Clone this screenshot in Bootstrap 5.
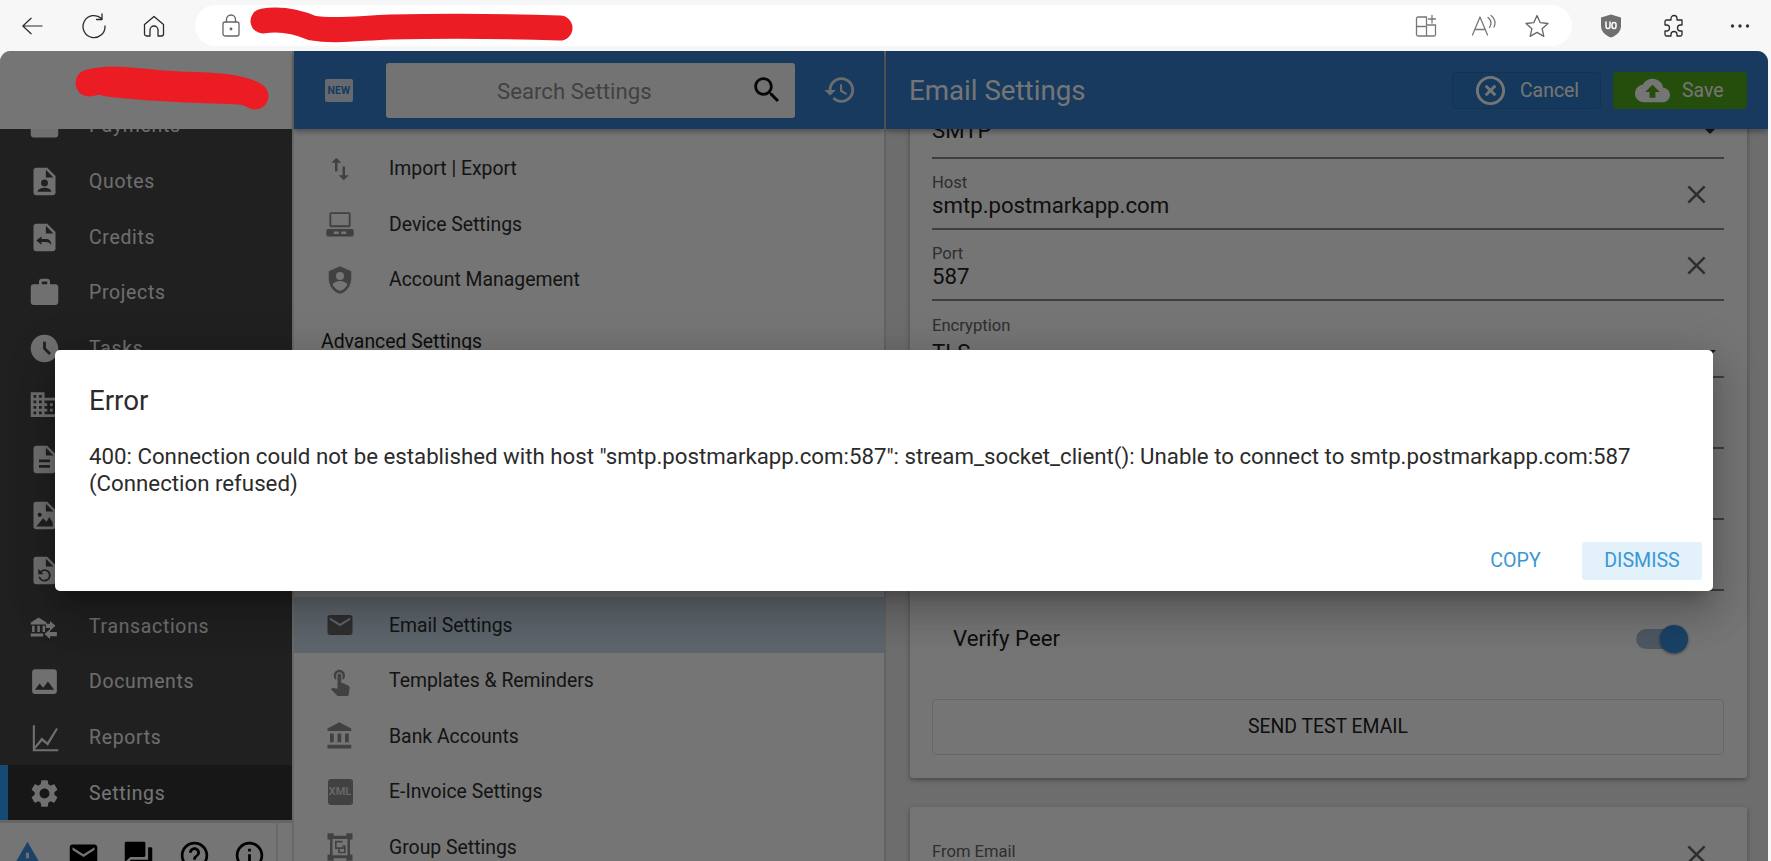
<!DOCTYPE html>
<html lang="en">
<head>
<meta charset="utf-8">
<title>Email Settings</title>
<link href="https://cdn.jsdelivr.net/npm/bootstrap@5.3.0/dist/css/bootstrap.min.css" rel="stylesheet">
<style>
html,body{height:861px;overflow:hidden;background:#f7f7f7;font-family:Roboto,"Liberation Sans",sans-serif;}
svg{display:block;flex:none;}
.chrome{height:51px;background:#f7f7f7;padding:0 21px 0 22px;}
.chrome svg{fill:none;stroke:#2b2b2b;stroke-width:1.3;stroke-linecap:round;stroke-linejoin:round;}
.chrome .dim{stroke:#777;}
.addr{width:1382px;height:41px;margin:0 28px 0 29px;background:#fff;border-radius:21px;padding:0 22px 0 26px;position:relative;}
.tbtn{width:22px;}
.redline{position:absolute;z-index:6;pointer-events:none;overflow:visible;}
.frame{position:relative;height:810px;width:1768px;border-radius:11px 11px 0 0;overflow:hidden;background:#fff;}
.sidecol{width:294px;flex:none;background:#464646;border-right:2px solid #e2e2e2;}
.logoarea{height:78px;background:#fff;flex:none;}
.sidescroll{height:692px;overflow:hidden;flex:none;}
.sideitem{height:55.6px;padding-left:28px;gap:28px;color:#f0f0f0;font-size:19.4px;font-weight:400;letter-spacing:.7px;fill:#f4f4f4;}
.sideitem svg{width:33px;height:33px;fill:#f4f4f4;}
.sideitem.on{background:#333;box-shadow:inset 8px 0 0 #329fff;color:#fff;}
.sidefoot{flex:1;background:#fff;border-top:3px solid #dcdcdc;padding:0 14px 0 11px;margin-top:-1.5px;}
.sidefoot svg{width:33px;height:33px;}
.footrow{flex:1;height:100%;border-right:2px solid #e4e4e4;padding:16px 10px 0 0;}
.setcol{width:592px;flex:none;border-right:2px solid #d8d8d8;background:#fff;}
.bluebar{height:78px;background:#327fcd;flex:none;box-shadow:0 3px 5px rgba(0,0,0,.3);position:relative;z-index:2;}
.newbadge{width:28px;height:23px;background:#dfe8f1;color:#327fcd;border-radius:2px;font-size:10.5px;font-weight:700;line-height:23px;text-align:center;margin:0 33px 0 31px;letter-spacing:.1px;}
.searchbox{width:409px;height:55px;background:#fafbfc;border-radius:3px;color:#8f8f8f;font-size:22.2px;padding-left:111px;padding-right:11px;}
.searchlabel{padding-top:3px;}
.searchbox svg{width:34px;height:34px;fill:#111;margin-left:auto;}
.histicon{width:34px;height:34px;fill:#e8eef4;margin-left:28px;}
.setlist{padding-top:12px;height:732px;overflow:hidden;flex:none;}
.setitem{height:55.55px;padding-left:31px;gap:34px;color:#2c2c2c;font-size:19.4px;}
.setitem svg{width:30px;height:30px;fill:#8f8f8f;}
.setitem.on{background:#cddcec;}
.sethead{height:67.5px;padding-left:27px;color:#222;font-size:19.4px;}
.xmlbox{width:25px;height:26px;margin:0 2.5px;background:#8f8f8f;border-radius:3px;color:#ddd;font-size:11px;font-weight:700;line-height:26px;text-align:center;}
.maincol{flex:1;background:#ededed;min-width:0;}
.maintitle{color:#fff;font-size:27.7px;padding-left:23px;padding-right:21px;}
.maintitle .pagetitle{padding-top:2px;}
.actbtn{height:37px;border-radius:4px;font-size:19.4px;gap:12px;color:#fff;padding:0;}
.actbtn span{padding-top:2px;}
.actbtn svg{width:35px;height:35px;fill:#fff;}
.cancelbtn{width:149px;background:#2f7cc8;border:1px solid #2a6fb6;padding-left:20px;}
.savebtn{width:134px;background:#52a81c;margin-left:12px;padding-left:21px;color:#fff;}
.mainscroll{height:732px;overflow:hidden;flex:none;padding:0 21px 0 24px;}
.formcard{background:#fff;border:0;border-radius:3px;box-shadow:0 2px 5px rgba(0,0,0,.35);padding:12px 23px 23px 22px;margin-top:-59px;}
.formcard2{margin-top:29px;padding-top:36px;}
.fld{height:71px;border-bottom:2px solid #888;padding-top:14.5px;position:relative;}
.fld.drop{height:77px;padding-top:16px;}
.fldlab{font-size:16.6px;line-height:18px;min-height:18px;color:#666;}
.fldval{font-size:22.2px;line-height:24px;color:#222;margin-top:1px;}
.fld.drop .fldval{margin-top:5px;}
.fld.drop.topdrop .fldval{margin-top:2px;}
.fldicon{position:absolute;right:12px;top:20px;width:31px;height:31px;fill:#666;}
.dropcaret{position:absolute;right:8px;bottom:20px;width:0;height:0;border-left:6px solid transparent;border-right:6px solid transparent;border-top:6px solid #333;}
.topdrop .dropcaret{bottom:23px;}
.peer{height:95px;padding:0 50px 0 21px;font-size:22.2px;color:#222;}
.trk{width:38px;height:20px;background:#a9bfd6;border-radius:10px;position:relative;margin-left:auto;}
.knob{position:absolute;right:-14px;top:-4px;width:28px;height:28px;background:#398fe0;border-radius:50%;box-shadow:0 1px 3px rgba(0,0,0,.5);}
.testbtn{height:56px;width:100%;background:transparent;border:1.5px solid #dedede;border-radius:4px;color:#222;font-size:19.4px;margin-top:13px;}
.scrim{position:absolute;inset:0;background:rgba(0,0,0,.54);z-index:4;}
.errdlg{position:absolute;left:55px;top:299px;width:1658px;height:241px;z-index:5;border:0;border-radius:5px;box-shadow:0 11px 15px -7px rgba(0,0,0,.2),0 24px 38px 3px rgba(0,0,0,.14),0 9px 46px 8px rgba(0,0,0,.12);padding:0 11px 11px 34px;color:#2b2b2b;}
.errtitle{font-size:27.7px;line-height:30px;margin:36px 0 27px;font-weight:400;}
.errtext{font-size:22.25px;line-height:27px;margin:0;}
.dlgbtn{font-size:19.6px;height:38px;border:0;border-radius:3px;color:#3a97d6;padding:0;background:transparent;}
.dlgbtn.copy{width:81px;margin-right:26px;}
.dlgbtn.dis{width:120px;background:#e3f1fa;}
</style>
</head>
<body>
<div class="chrome d-flex align-items-center">
  <svg class="tbtn" width="24" height="24" viewBox="0 0 24 24" style="margin-left:-1px"><path d="M23 12H2M11 3.500 2 12l9 8.500"/></svg>
  <svg width="26" height="26" viewBox="0 0 26 26" style="margin-left:38px"><path d="M20.500 5.500A11 11 0 1 0 24 13M21 1v5.500h-5.500"/></svg>
  <svg width="24" height="24" viewBox="0 0 24 24" style="margin-left:35px"><path d="M2.500 10.500 12 2.500l9.500 8V20a2 2 0 0 1-2 2H16v-6a4 4 0 0 0-8 0v6H4.500a2 2 0 0 1-2-2Z"/></svg>
  <div class="addr d-flex align-items-center">
    <svg width="20" height="24" viewBox="0 0 20 24" style="stroke:#666"><rect x="2" y="8" width="16" height="14" rx="2"/><path d="M5.500 8V5.500a4.500 4.500 0 0 1 9 0V8"/><circle cx="10" cy="15" r=".8"/></svg>
    <svg class="ms-auto dim" width="24" height="24" viewBox="0 0 24 24"><path d="M12.500 3H4a1.500 1.500 0 0 0-1.500 1.500v16A1.500 1.500 0 0 0 4 22h16a1.500 1.500 0 0 0 1.500-1.500V11H12.500ZM2.500 12.500h10V22M18 1.500V9M14.500 5h7"/></svg>
    <svg class="dim" width="26" height="24" viewBox="0 0 26 24" style="margin-left:33px"><path d="M1.500 21 9 3l7.500 18M4 15.500h10M17 3.500c2 1.500 3 3.500 3 5.500s-.5 3-1.500 4.500M20 1.500c2.500 2 4 4.500 4 7.500 0 1.500-.5 3-1 4"/></svg>
    <svg width="26" height="26" viewBox="0 0 26 26" style="margin-left:27px;stroke:#666"><path d="M13 2.500l3.200 7.200 7.800.8-5.900 5.200 1.700 7.700-6.800-4-6.800 4 1.700-7.700L2 10.500l7.800-.8Z"/></svg>
  </div>
  <svg width="22" height="24" viewBox="0 0 22 24" style="stroke:none;fill:#6f6f6f"><path d="M11 .5 21 3.500V12c0 5-4 9.500-10 11.500C5 21.500 1 17 1 12V3.500Z"/><path d="M6 8v4.500a2 2 0 0 0 4 0V8M12 12.500v-2a2 2 0 0 1 4 0v2a2 2 0 0 1-4 0Z" fill="none" stroke="#fff" stroke-width="1.500"/></svg>
  <svg width="24" height="24" viewBox="0 0 24 24" style="margin-left:40px"><path d="M9 4.500a3 3 0 0 1 6 0V6h5v5h-1.500a3 3 0 0 0 0 6H20v3.500a1.500 1.500 0 0 1-1.500 1.500H15v-1.500a3 3 0 0 0-6 0V22H4.500A1.500 1.500 0 0 1 3 20.500V17h1.500a3 3 0 0 0 0-6H3V7.500A1.500 1.500 0 0 1 4.500 6H9Z"/></svg>
  <div class="bg-secondary-subtle" style="width:1.5px;height:22px;margin-left:22px"></div>
  <svg width="20" height="6" viewBox="0 0 20 6" style="margin-left:21px;stroke:none;fill:#333"><circle cx="2.500" cy="3" r="1.700"/><circle cx="10" cy="3" r="1.700"/><circle cx="17.500" cy="3" r="1.700"/></svg>
</div>

<svg class="redline" style="left:250px;top:7px" width="324" height="36" viewBox="0 0 324 36" fill="none" stroke="#ec1c24" stroke-linecap="round" stroke-linejoin="round"><path d="M13 14C32 11 48 15 62 21C85 25 110 21 140 20C190 19 250 19 310 21" stroke-width="25"/></svg>

<div class="frame d-flex">
  <div class="sidecol d-flex flex-column">
    <div class="logoarea"></div>
    <div class="sidescroll">
      <div style="margin-top:-30.750px">
        <div class="sideitem d-flex align-items-center"><svg viewBox="0 0 24 24"><path d="M20 4H4c-1.100 0-2 .9-2 2v12c0 1.100.9 2 2 2h16c1.100 0 2-.9 2-2V6c0-1.100-.9-2-2-2z"/></svg>Payments</div>
        <div class="sideitem d-flex align-items-center"><svg viewBox="0 0 24 24"><path fill-rule="evenodd" d="M14 2H6a2 2 0 0 0-2 2v16a2 2 0 0 0 2 2h12a2 2 0 0 0 2-2V8zM13 3.500 18.500 9H13zM12 10.500a2.500 2.500 0 1 1 0 5 2.500 2.500 0 0 1 0-5zM7 19.500c0-2 3-3 5-3s5 1 5 3z"/></svg>Quotes</div>
        <div class="sideitem d-flex align-items-center"><svg viewBox="0 0 24 24"><path fill-rule="evenodd" d="M14 2H6a2 2 0 0 0-2 2v16a2 2 0 0 0 2 2h12a2 2 0 0 0 2-2V8zM13 3.500 18.500 9H13zM9.800 11v2h3.200c2.500 0 4 1.500 4 4.500-1-1.500-2.300-2.300-4-2.300H9.800v2L6 14.100z"/></svg>Credits</div>
        <div class="sideitem d-flex align-items-center"><svg viewBox="0 0 24 24"><path d="M20 6h-4V4c0-1.110-.89-2-2-2h-4c-1.110 0-2 .89-2 2v2H4c-1.110 0-1.990.89-1.990 2L2 19c0 1.110.89 2 2 2h16c1.110 0 2-.89 2-2V8c0-1.110-.89-2-2-2zm-6 0h-4V4h4v2z"/></svg>Projects</div>
        <div class="sideitem d-flex align-items-center"><svg viewBox="0 0 24 24"><path d="M11.990 2C6.470 2 2 6.480 2 12s4.470 10 9.990 10C17.520 22 22 17.520 22 12S17.520 2 11.990 2zm3.300 14.710L11 12.410V7h2v4.590l3.710 3.710-1.420 1.410z"/></svg>Tasks</div>
        <div class="sideitem d-flex align-items-center"><svg viewBox="0 0 24 24"><path d="M12 7V3H2v18h20V7H12zM6 19H4v-2h2v2zm0-4H4v-2h2v2zm0-4H4V9h2v2zm0-4H4V5h2v2zm4 12H8v-2h2v2zm0-4H8v-2h2v2zm0-4H8V9h2v2zm0-4H8V5h2v2zm10 12h-8v-2h2v-2h-2v-2h2v-2h-2V9h8v10zm-2-8h-2v2h2v-2zm0 4h-2v2h2v-2z"/></svg></div>
        <div class="sideitem d-flex align-items-center"><svg viewBox="0 0 24 24"><path d="M14 2H6c-1.100 0-1.990.9-1.990 2L4 20c0 1.100.89 2 1.990 2H18c1.100 0 2-.9 2-2V8l-6-6zm2 16H8v-2h8v2zm0-4H8v-2h8v2zm-3-5V3.500L18.500 9H13z"/></svg></div>
        <div class="sideitem d-flex align-items-center"><svg viewBox="0 0 24 24"><path fill-rule="evenodd" d="M14 2H6a2 2 0 0 0-2 2v16a2 2 0 0 0 2 2h12a2 2 0 0 0 2-2V8zM13 3.500 18.500 9H13zM8.500 10a1.500 1.500 0 1 1 0 3 1.500 1.500 0 0 1 0-3zM6 20l5-6 2.500 2.500L15.500 13 18 17v3z"/></svg></div>
        <div class="sideitem d-flex align-items-center"><svg viewBox="0 0 24 24"><path fill-rule="evenodd" d="M14 2H6a2 2 0 0 0-2 2v16a2 2 0 0 0 2 2h12a2 2 0 0 0 2-2V8zM13 3.500 18.500 9H13zM12 11a4.500 4.500 0 1 1-4.400 5.500h1.300A3.200 3.200 0 1 0 12 12.300a3 3 0 0 0-2.100.9l1.600 1.600H7.500v-4l1.500 1.500A4.300 4.300 0 0 1 12 11z"/></svg></div>
        <div class="sideitem d-flex align-items-center"><svg viewBox="0 0 24 24"><path d="M2 10.500h11.500V9L7.750 5.500 2 9zM3 11.500h1.800V16H3zM6.800 11.500h1.800V16H6.800zM10.600 11.500h1.800V16h-1.800zM2 17h9v2.200H2zM16 8v2h-3v3h3v2l4-3.500zM16 14l-4 3.500 4 3.500v-2h5v-3h-5z"/></svg>Transactions</div>
        <div class="sideitem d-flex align-items-center"><svg viewBox="0 0 24 24"><path d="M21 19V5c0-1.100-.9-2-2-2H5c-1.100 0-2 .9-2 2v14c0 1.100.9 2 2 2h14c1.100 0 2-.9 2-2zM8.500 13.500l2.500 3.010L14.500 12l4.500 6H5l3.500-4.500z"/></svg>Documents</div>
        <div class="sideitem d-flex align-items-center"><svg viewBox="0 0 24 24"><path d="M3.500 3H5v15.300L10 12l4 3.500L20.500 5l1.200.8L14.500 18l-4.200-3.500L5 20.500h17V22H3.500z"/></svg>Reports</div>
        <div class="sideitem on d-flex align-items-center"><svg viewBox="0 0 24 24"><path d="M19.140 12.940c.04-.3.06-.61.06-.94 0-.32-.02-.64-.07-.94l2.030-1.580a.49.49 0 0 0 .12-.61l-1.920-3.320a.488.488 0 0 0-.59-.22l-2.390.96c-.5-.38-1.030-.7-1.620-.94l-.36-2.540a.484.484 0 0 0-.48-.41h-3.840c-.24 0-.43.17-.47.41l-.36 2.540c-.59.24-1.130.57-1.620.94l-2.390-.96c-.22-.08-.47 0-.59.22L2.740 8.870c-.12.21-.08.47.12.61l2.030 1.580c-.05.3-.09.63-.09.94s.02.64.07.94l-2.030 1.580a.49.49 0 0 0-.12.61l1.920 3.320c.12.22.37.29.59.22l2.390-.96c.5.38 1.030.7 1.620.94l.36 2.540c.05.24.24.41.48.41h3.840c.24 0 .44-.17.47-.41l.36-2.540c.59-.24 1.130-.56 1.620-.94l2.390.96c.22.08.47 0 .59-.22l1.920-3.320c.12-.22.07-.47-.12-.61l-2.010-1.580zM12 15.600c-1.980 0-3.600-1.620-3.600-3.600s1.620-3.600 3.600-3.600 3.600 1.620 3.600 3.600-1.620 3.600-3.600 3.600z"/></svg>Settings</div>
      </div>
    </div>
    <div class="sidefoot d-flex">
      <div class="footrow d-flex justify-content-between">
        <svg viewBox="0 0 24 24" style="fill:#3c93e8"><path d="M1 21h22L12 2 1 21zm12-3h-2v-2h2v2zm0-4h-2v-4h2v4z"/></svg>
        <svg viewBox="0 0 24 24" style="fill:#000"><path d="M20 4H4c-1.100 0-1.990.9-1.990 2L2 18c0 1.100.9 2 2 2h16c1.100 0 2-.9 2-2V6c0-1.100-.9-2-2-2zm0 4l-8 5-8-5V6l8 5 8-5v2z"/></svg>
        <svg viewBox="0 0 24 24" style="fill:#000"><path d="M21 6h-2v9H6v2c0 .55.45 1 1 1h11l4 4V7c0-.55-.45-1-1-1zm-4 6V3c0-.55-.45-1-1-1H3c-.55 0-1 .45-1 1v14l4-4h10c.55 0 1-.45 1-1z"/></svg>
        <svg viewBox="0 0 24 24" style="fill:#000"><path d="M11 18h2v-2h-2v2zm1-16C6.480 2 2 6.480 2 12s4.480 10 10 10 10-4.480 10-10S17.520 2 12 2zm0 18c-4.410 0-8-3.590-8-8s3.590-8 8-8 8 3.590 8 8-3.590 8-8 8zm0-14c-2.210 0-4 1.790-4 4h2c0-1.100.9-2 2-2s2 .9 2 2c0 2-3 1.750-3 5h2c0-2.250 3-2.500 3-5 0-2.210-1.790-4-4-4z"/></svg>
        <svg viewBox="0 0 24 24" style="fill:#000"><path d="M11 7h2v2h-2zm0 4h2v6h-2zm1-9C6.480 2 2 6.480 2 12s4.480 10 10 10 10-4.480 10-10S17.520 2 12 2zm0 18c-4.410 0-8-3.590-8-8s3.590-8 8-8 8 3.590 8 8-3.590 8-8 8z"/></svg>
      </div>
    </div>
  </div>

  <div class="setcol d-flex flex-column">
    <div class="bluebar d-flex align-items-center">
      <div class="newbadge">NEW</div>
      <div class="searchbox d-flex align-items-center"><span class="searchlabel">Search Settings</span>
        <svg viewBox="0 0 24 24"><path d="M15.500 14h-.79l-.28-.27C15.410 12.590 16 11.110 16 9.500 16 5.910 13.090 3 9.500 3S3 5.910 3 9.500 5.910 16 9.500 16c1.610 0 3.090-.59 4.230-1.570l.27.28v.79l5 4.990L20.490 19l-4.990-5zm-6 0C7.010 14 5 11.990 5 9.500S7.010 5 9.500 5 14 7.010 14 9.500 11.990 14 9.500 14z"/></svg>
      </div>
      <svg class="histicon" viewBox="0 0 24 24"><path d="M13 3c-4.970 0-9 4.030-9 9H1l3.890 3.890.07.14L9 12H6c0-3.870 3.130-7 7-7s7 3.130 7 7-3.130 7-7 7c-1.930 0-3.680-.79-4.940-2.060l-1.420 1.420C8.270 19.990 10.510 21 13 21c4.970 0 9-4.030 9-9s-4.030-9-9-9zm-1 5v5l4.280 2.540.72-1.210-3.500-2.080V8H12z"/></svg>
    </div>
    <div class="setlist">
      <div class="setitem d-flex align-items-center"><svg viewBox="0 0 24 24"><path d="M9 3L5 6.990h3V14h2V6.990h3L9 3zm7 14.010V10h-2v7.010h-3L15 21l4-3.990h-3z"/></svg>Import | Export</div>
      <div class="setitem d-flex align-items-center"><svg viewBox="0 0 24 24"><path fill-rule="evenodd" d="M5 2.500h14a1.500 1.500 0 0 1 1.500 1.500v9a1.500 1.500 0 0 1-1.500 1.500H5A1.500 1.500 0 0 1 3.500 13V4A1.500 1.500 0 0 1 5 2.500zM5 4v9h14V4zM2.500 16h19A1.500 1.500 0 0 1 23 17.500v3a1.500 1.500 0 0 1-1.500 1.500h-19A1.500 1.500 0 0 1 1 20.500v-3A1.500 1.500 0 0 1 2.500 16zM7 18v2h4v-2zm6 0v2h4v-2z"/></svg>Device Settings</div>
      <div class="setitem d-flex align-items-center"><svg viewBox="0 0 24 24"><path fill-rule="evenodd" d="M12 1 3 5v6c0 5.550 3.840 10.740 9 12 5.160-1.260 9-6.450 9-12V5zM12 5.500a3.200 3.200 0 1 1 0 6.400 3.200 3.200 0 0 1 0-6.400zM6 15.500c1-1.800 3.500-2.800 6-2.800s5 1 6 2.800c-1.200 2.300-3.300 4.300-6 5.200-2.700-.9-4.800-2.900-6-5.200z"/></svg>Account Management</div>
      <div class="sethead d-flex align-items-center">Advanced Settings</div>
      <div class="setitem"></div>
      <div class="setitem"></div>
      <div class="setitem"></div>
      <div class="setitem"></div>
      <div class="setitem on d-flex align-items-center"><svg viewBox="0 0 24 24" style="fill:#666"><path d="M20 4H4c-1.100 0-1.990.9-1.990 2L2 18c0 1.100.9 2 2 2h16c1.100 0 2-.9 2-2V6c0-1.100-.9-2-2-2zm0 4l-8 5-8-5V6l8 5 8-5v2z"/></svg>Email Settings</div>
      <div class="setitem d-flex align-items-center"><svg viewBox="0 0 24 24"><path d="M9 11.240V7.500C9 6.120 10.120 5 11.500 5S14 6.120 14 7.500v3.740c1.210-.81 2-2.180 2-3.740C16 5.010 13.990 3 11.500 3S7 5.010 7 7.500c0 1.560.79 2.930 2 3.740zm9.840 4.630l-4.540-2.260c-.17-.07-.35-.11-.54-.11H13v-6c0-.83-.67-1.500-1.500-1.500S10 6.670 10 7.500v10.740l-3.430-.72c-.08-.01-.15-.03-.24-.03-.31 0-.59.13-.79.33l-.79.8 4.940 4.940c.27.27.65.44 1.060.44h6.790c.75 0 1.330-.55 1.440-1.280l.75-5.270c.01-.07.02-.14.02-.2 0-.62-.38-1.160-.91-1.380z"/></svg>Templates &amp; Reminders</div>
      <div class="setitem d-flex align-items-center"><svg viewBox="0 0 24 24"><path d="M4 10v7h3v-7H4zm6 0v7h3v-7h-3zM2 22h19v-3H2v3zm14-12v7h3v-7h-3zm-4.500-9L2 6v2h19V6l-9.500-5z"/></svg>Bank Accounts</div>
      <div class="setitem d-flex align-items-center"><div class="xmlbox">XML</div>E-Invoice Settings</div>
      <div class="setitem d-flex align-items-center"><svg viewBox="0 0 24 24"><path fill-rule="evenodd" d="M2 1h5v2h10V1h5v5h-2v12h2v5h-5v-2H7v2H2v-5h2V6H2zM6 5.500V18.500h12V5.500zM8 7h6v3.500h2.500V17h-6v-3.500H8zM9.300 8.300v3.900H14v-3.900zM11.800 13.500v2.200h3.400v-4H15v1.800z"/></svg>Group Settings</div>
    </div>
  </div>

  <div class="maincol d-flex flex-column">
    <div class="bluebar maintitle d-flex align-items-center">
      <span class="me-auto pagetitle">Email Settings</span>
      <button class="btn actbtn cancelbtn d-flex align-items-center" type="button"><svg viewBox="0 0 24 24"><path d="M14.590 8L12 10.590 9.410 8 8 9.410 10.590 12 8 14.590 9.410 16 12 13.410 14.590 16 16 14.590 13.410 12 16 9.410 14.590 8zM12 2C6.470 2 2 6.470 2 12s4.470 10 10 10 10-4.470 10-10S17.530 2 12 2zm0 18c-4.410 0-8-3.590-8-8s3.590-8 8-8 8 3.590 8 8-3.590 8-8 8z"/></svg><span>Cancel</span></button>
      <button class="btn actbtn savebtn d-flex align-items-center" type="button"><svg viewBox="0 0 24 24"><path d="M19.350 10.040C18.670 6.590 15.640 4 12 4 9.110 4 6.600 5.640 5.350 8.040 2.340 8.360 0 10.910 0 14c0 3.310 2.690 6 6 6h13c2.760 0 5-2.240 5-5 0-2.640-2.050-4.780-4.650-4.960zM14 13v4h-4v-4H7l5-5 5 5h-3z"/></svg><span>Save</span></button>
    </div>
    <div class="mainscroll">
      <div class="card formcard">
        <div class="fld drop topdrop"><div class="fldlab"></div><div class="fldval">SMTP</div><span class="dropcaret"></span></div>
        <div class="fld"><div class="fldlab">Host</div><div class="fldval">smtp.postmarkapp.com</div><svg class="fldicon" viewBox="0 0 24 24"><path d="M19 6.410L17.590 5 12 10.590 6.410 5 5 6.410 10.590 12 5 17.590 6.410 19 12 13.410 17.590 19 19 17.590 13.410 12z"/></svg></div>
        <div class="fld"><div class="fldlab">Port</div><div class="fldval">587</div><svg class="fldicon" viewBox="0 0 24 24"><path d="M19 6.410L17.590 5 12 10.590 6.410 5 5 6.410 10.590 12 5 17.590 6.410 19 12 13.410 17.590 19 19 17.590 13.410 12z"/></svg></div>
        <div class="fld drop"><div class="fldlab">Encryption</div><div class="fldval">TLS</div><span class="dropcaret"></span></div>
        <div class="fld"></div>
        <div class="fld"></div>
        <div class="fld"></div>
        <div class="peer d-flex align-items-center">Verify Peer<div class="trk"><div class="knob"></div></div></div>
        <button class="btn testbtn" type="button">SEND TEST EMAIL</button>
      </div>
      <div class="card formcard formcard2">
        <div class="fld" style="padding-top:0"><div class="fldlab">From Email</div><svg class="fldicon" style="top:-4px" viewBox="0 0 24 24"><path d="M19 6.410L17.590 5 12 10.590 6.410 5 5 6.410 10.590 12 5 17.590 6.410 19 12 13.410 17.590 19 19 17.590 13.410 12z"/></svg></div>
      </div>
    </div>
  </div>

  <div class="scrim"></div>
  <svg class="redline" style="left:75px;top:15px" width="195" height="42" viewBox="0 0 195 42" fill="none" stroke="#ec1c24" stroke-linecap="round" stroke-linejoin="round"><path d="M14 17C40 10 60 17 105 19C140 20 165 21 180 30" stroke-width="27"/><path d="M30 20C70 26 130 27 175 29" stroke-width="20"/></svg>
  <div class="card errdlg">
    <h5 class="errtitle">Error</h5>
    <p class="errtext">400: Connection could not be established with host "smtp.postmarkapp.com:587": stream_socket_client(): Unable to connect to smtp.postmarkapp.com:587 (Connection refused)</p>
    <div class="d-flex justify-content-end align-items-center mt-auto">
      <button class="btn dlgbtn copy" type="button">COPY</button>
      <button class="btn dlgbtn dis" type="button">DISMISS</button>
    </div>
  </div>
</div>
<script src="https://cdn.jsdelivr.net/npm/bootstrap@5.3.0/dist/js/bootstrap.bundle.min.js"></script>
</body>
</html>
